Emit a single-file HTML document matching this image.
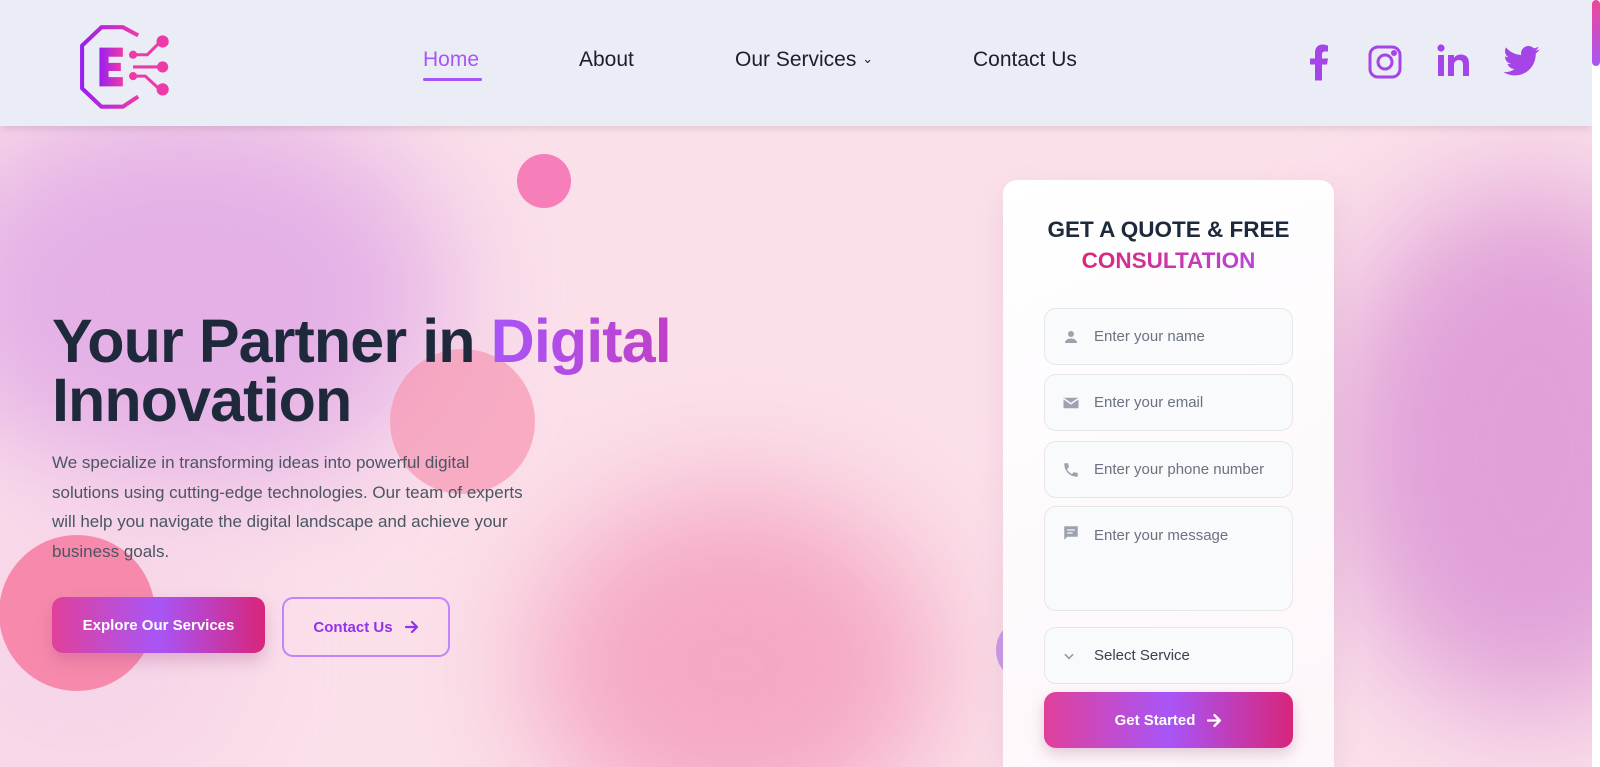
<!DOCTYPE html>
<html><head><meta charset="utf-8"><style>
*{box-sizing:border-box;margin:0;padding:0}
html,body{width:1600px;height:767px;overflow:hidden}
body{font-family:"Liberation Sans","DejaVu Sans",sans-serif;background:#fff;position:relative}
.page{position:absolute;left:0;top:0;width:1592px;height:767px;overflow:hidden;background:#fbe0ea}
.blob{position:absolute;border-radius:50%;filter:blur(60px)}
.sb{position:absolute;left:1592px;top:0;width:8px;height:66px;border-radius:4px;background:linear-gradient(#ec4899,#a855f7)}
header{position:absolute;left:0;top:0;width:1592px;height:126px;background:#eaedf6;box-shadow:0 2px 8px rgba(0,0,0,.12);z-index:5}
nav a{position:absolute;top:48px;font-size:21px;color:#1e1e2a;text-decoration:none}
.circle{position:absolute;border-radius:50%}
h1{position:absolute;left:52px;top:312px;font-size:61px;line-height:59px;font-weight:bold;color:#1e293b;letter-spacing:-.9px}
h1 span{background:linear-gradient(90deg,#a855f7,#c040c8);-webkit-background-clip:text;color:transparent}
.p{position:absolute;left:52px;top:448px;width:600px;font-size:17px;line-height:29.6px;color:#4b5563}
.btn1{position:absolute;left:52px;top:597px;width:213px;height:56px;border-radius:11px;background:linear-gradient(90deg,#e0409a,#a855f7 50%,#d8257a);color:#fff;font-weight:bold;font-size:15px;display:flex;align-items:center;justify-content:center;box-shadow:0 8px 16px rgba(150,60,120,.25)}
.btn2{position:absolute;left:282px;top:597px;width:168px;height:60px;border-radius:11px;border:2px solid #c084fc;color:#9333ea;font-weight:bold;font-size:15px;display:flex;align-items:center;justify-content:center;gap:12px}
.card{position:absolute;left:1003px;top:180px;width:331px;height:587px;border-radius:14px 14px 0 0;background:linear-gradient(160deg,#fff,#fdf6fa);box-shadow:0 10px 30px rgba(150,80,130,.12);z-index:3}
.card h2{text-align:center;font-size:22.5px;line-height:31px;margin-top:34px;color:#1e293b;font-weight:bold}
.card h2 span{background:linear-gradient(90deg,#db2777,#b845d8);-webkit-background-clip:text;color:transparent}
.in{position:absolute;left:41px;width:249px;height:57px;border:1px solid #e5e7eb;border-radius:12px;background:#f8fafc;font-size:15px;color:#6b7280;padding-left:49px;line-height:55px}
.in svg{position:absolute;left:17px;top:19px}
.gs{position:absolute;left:41px;top:512px;width:249px;height:56px;border-radius:12px;background:linear-gradient(90deg,#e0409a,#a855f7 50%,#d8257a);color:#fff;font-weight:bold;font-size:15px;display:flex;align-items:center;justify-content:center;gap:12px;box-shadow:0 6px 14px rgba(150,60,120,.25)}
</style></head><body>
<div class="page">
<div class="blob" style="left:-80px;top:100px;width:530px;height:390px;background:#e4b0e6"></div>
<div class="blob" style="left:1330px;top:185px;width:400px;height:530px;background:#e0a0d8"></div>
<div class="blob" style="left:530px;top:490px;width:410px;height:350px;background:#f5a8c4"></div>
<div class="blob" style="left:-100px;top:510px;width:360px;height:300px;background:#f6d2e8;opacity:.8"></div>
<div class="circle" style="left:517px;top:154px;width:54px;height:54px;background:#f67fb9"></div>
<div class="circle" style="left:390px;top:349px;width:145px;height:145px;background:rgba(246,150,178,.7)"></div>
<div class="circle" style="left:-1px;top:535px;width:156px;height:156px;background:#f78aac"></div>
<div class="circle" style="left:996px;top:624px;width:40px;height:52px;background:#c89ae8"></div>

<header>
<svg style="position:absolute;left:77px;top:25px" width="106" height="88" viewBox="0 0 104 86">
<defs><linearGradient id="lg" x1="0" x2="1"><stop offset="0" stop-color="#9b1ff0"/><stop offset="1" stop-color="#ee3aa8"/></linearGradient></defs>
<path d="M60 10 L45 2 L24 2 L5 20 L5 62 L24 80 L45 80 L60 70" fill="none" stroke="url(#lg)" stroke-width="4" stroke-linejoin="round"/>
<path d="M22 22 H45 V31 H31 V37 H43 V45 H31 V51 H45 V60 H22 Z" fill="url(#lg)"/>
<g stroke="#ee3aa8" stroke-width="3" fill="none"><path d="M55 29 H69 L80 18"/><path d="M55 41 H81"/><path d="M55 50 H67 L79 61"/></g>
<g fill="#ee3aa8"><circle cx="55" cy="29" r="4"/><circle cx="84" cy="16" r="6"/><circle cx="84" cy="41" r="5.5"/><circle cx="55" cy="50" r="4"/><circle cx="84" cy="63" r="6"/></g>
</svg>
<nav>
<a style="left:423px;color:#a855f7">Home</a>
<div style="position:absolute;left:423px;top:78px;width:59px;height:3px;background:#a855f7;border-radius:2px"></div>
<a style="left:579px">About</a>
<a style="left:735px">Our Services <span style="font-size:13px;vertical-align:3px">&#8964;</span></a>
<a style="left:973px">Contact Us</a>
</nav>
<svg style="position:absolute;left:1307px;top:44px" width="24" height="37" viewBox="0 0 24 36"><path d="M15 36V20h5l1-6h-6V10c0-2 1-3 3-3h3V1c-1 0-3-1-5-1-5 0-8 3-8 8v6H3v6h5v16z" fill="#a545e8"/></svg>
<svg style="position:absolute;left:1368px;top:45px" width="34" height="34" viewBox="0 0 34 34" fill="none" stroke="#a545e8" stroke-width="3"><rect x="2" y="2" width="30" height="30" rx="8"/><circle cx="17" cy="17" r="7"/><circle cx="26" cy="8" r="1.5" fill="#a545e8"/></svg>
<svg style="position:absolute;left:1437px;top:44px" width="33" height="33" viewBox="0 0 33 33" fill="#a545e8"><circle cx="4" cy="4" r="3.6"/><rect x="1" y="11" width="6" height="21"/><path d="M11 11h6v3c1.5-2.5 4-3.5 7-3.5 5 0 8 3 8 9V32h-6V21c0-3-1-5-4-5s-5 2-5 5v11h-6z"/></svg>
<svg style="position:absolute;left:1503px;top:46px" width="37" height="30" viewBox="0 0 24 20"><path d="M24 2.3c-.9.4-1.8.7-2.8.8 1-.6 1.8-1.6 2.2-2.7-1 .6-2 1-3.1 1.2C19.3.6 18 0 16.6 0c-2.7 0-4.9 2.2-4.9 4.9 0 .4 0 .8.1 1.1C7.7 5.8 4.1 3.9 1.7.9c-.4.7-.7 1.6-.7 2.5 0 1.7.9 3.2 2.2 4.1-.8 0-1.6-.2-2.2-.6v.1c0 2.4 1.7 4.4 3.9 4.8-.4.1-.8.2-1.3.2-.3 0-.6 0-.9-.1.6 2 2.4 3.4 4.6 3.4-1.7 1.3-3.8 2.1-6.1 2.1H0c2.2 1.4 4.8 2.2 7.5 2.2 9.1 0 14-7.5 14-14v-.6c1-.7 1.8-1.6 2.5-2.5z" fill="#a545e8"/></svg>
</header>

<h1>Your Partner in <span>Digital</span><br>Innovation</h1>
<div class="p">We specialize in transforming ideas into powerful digital<br>solutions using cutting-edge technologies. Our team of experts<br>will help you navigate the digital landscape and achieve your<br>business goals.</div>
<div class="btn1">Explore Our Services</div>
<div class="btn2">Contact Us <svg width="14" height="14" viewBox="0 0 14 14" fill="none" stroke="#9333ea" stroke-width="2.2" stroke-linecap="round" stroke-linejoin="round"><path d="M1 7h11M7 2l5 5-5 5"/></svg></div>

<div class="card">
<h2>GET A QUOTE &amp; FREE<br><span>CONSULTATION</span></h2>
<div class="in" style="top:128px"><svg width="18" height="18" viewBox="0 0 24 24" fill="#9ca3af"><circle cx="12" cy="8" r="4"/><path d="M4 20c0-4 4-6 8-6s8 2 8 6z"/></svg>Enter your name</div>
<div class="in" style="top:194px"><svg width="18" height="18" viewBox="0 0 24 24" fill="#9ca3af"><path d="M2 5h20v14H2z"/><path d="M2 6l10 7 10-7" stroke="#f8fafc" stroke-width="2" fill="none"/></svg>Enter your email</div>
<div class="in" style="top:261px"><svg width="18" height="18" viewBox="0 0 24 24" fill="#9ca3af"><path d="M6.6 10.8c1.4 2.8 3.8 5.1 6.6 6.6l2.2-2.2c.3-.3.7-.4 1-.2 1.1.4 2.3.6 3.6.6.6 0 1 .4 1 1V20c0 .6-.4 1-1 1C10.6 21 3 13.4 3 4c0-.6.4-1 1-1h3.5c.6 0 1 .4 1 1 0 1.3.2 2.5.6 3.6.1.3 0 .7-.2 1z"/></svg>Enter your phone number</div>
<div class="in" style="top:326px;height:105px;line-height:1;padding-top:21px"><svg style="top:17px" width="18" height="18" viewBox="0 0 24 24" fill="#9ca3af"><path d="M3 3h18v14H7l-4 4z"/><path d="M7 8h10M7 12h7" stroke="#f8fafc" stroke-width="1.6"/></svg>Enter your message</div>
<div class="in" style="top:447px;color:#374151"><svg style="top:21px" width="14" height="14" viewBox="0 0 24 24" fill="none" stroke="#9ca3af" stroke-width="3"><path d="M5 9l7 7 7-7"/></svg>Select Service</div>
<div class="gs">Get Started <svg width="15" height="15" viewBox="0 0 14 14" fill="none" stroke="#fff" stroke-width="2.2" stroke-linecap="round" stroke-linejoin="round"><path d="M1 7h11M7 2l5 5-5 5"/></svg></div>
</div>
</div>
<div class="sb"></div>
</body></html>
